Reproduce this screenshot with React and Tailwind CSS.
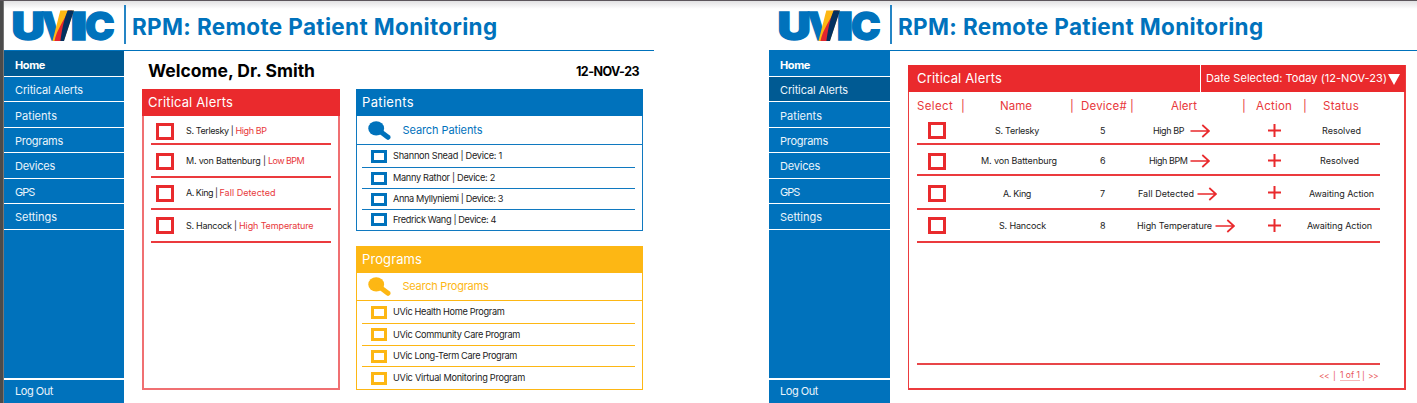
import { useLayoutEffect, useRef, useState } from "react";

// Text set to a given width by spreading the difference over its letters.
function T({ w, className = "", children }) {
  const ref = useRef(null);
  const [ls, setLs] = useState(null);
  useLayoutEffect(() => {
    if (ls === null) {
      const n = ref.current.textContent.length;
      setLs((w - ref.current.getBoundingClientRect().width) / n);
    }
  }, [w, ls]);
  return (
    <span ref={ref} className={"inline-block shrink-0 whitespace-pre " + className} style={{ letterSpacing: ls === null ? undefined : ls + "px" }}>
      {children}
    </span>
  );
}

function Logo() {
  return (
    <svg viewBox="0 0 104 44" className="h-[44px] w-[104px] shrink-0 overflow-visible" fontFamily="Inter, sans-serif" fontWeight="900" fontSize="38.5" fill="#0072bc" stroke="#0072bc" strokeWidth="1.3">
      <text x="-1.6" y="34.8" textLength="33.4" lengthAdjust="spacingAndGlyphs">U</text>
      <text x="28.6" y="34.8" textLength="31" lengthAdjust="spacingAndGlyphs">V</text>
      <text x="57.2" y="34.8" textLength="17.2" lengthAdjust="spacingAndGlyphs">I</text>
      <text x="72" y="34.8" textLength="29.6" lengthAdjust="spacingAndGlyphs">C</text>
      <g stroke="none" transform="translate(0 5.6)">
        <path d="M47.3 0H60.8L50.8 30.4H39.5Z" fill="#fdb714" />
        <path d="M55 0C52 9 43.5 19 41.5 30.4H49L59 0Z" fill="#e3262f" />
        <path d="M54.6 0H61L51 30.4H47.4C49 20 50 12 54.6 0Z" fill="#04305f" />
      </g>
    </svg>
  );
}

function Header({ className }) {
  return (
    <header className={"flex h-[50px] shrink-0 items-start " + className}>
      <div className="pt-[5px]"><Logo /></div>
      <div className="ml-[7.5px] mt-[5px] h-[39px] w-[2px] shrink-0 bg-[#2585c5]" />
      <div className="flex h-[53px] items-center pl-[6px]">
        <T w={365.5} className="text-[22.5px] font-bold text-[#0072bc]">RPM: Remote Patient Monitoring</T>
      </div>
    </header>
  );
}

const nav = [
  ["Home", 30, "h-[26px] pt-[4px]"],
  ["Critical Alerts", 68, "h-[25px] pt-[3px]"],
  ["Patients", 42, "h-[26px] pt-[3px]"],
  ["Programs", 48, "h-[25px] pt-[2px]"],
  ["Devices", 40, "h-[26px] pt-[2px]"],
  ["GPS", 19.5, "h-[25px] pt-[2px]"],
  ["Settings", 42, "h-[26px] pt-[2px]"],
];

function Sidebar({ active, className }) {
  return (
    <nav className={"flex h-[353px] shrink-0 flex-col bg-[#0072bc] pt-px text-[11px] leading-none text-[#eaf4fb] " + className}>
      {nav.map(([label, w, h]) => (
        <div key={label} className={"flex shrink-0 items-center border-b-[1.5px] border-white pl-[11px] " + h + (label === active ? " bg-[#005a93]" : "") + (label === "Home" ? " font-bold text-white" : "")}>
          <T w={w}>{label}</T>
        </div>
      ))}
      <div className="mt-auto flex h-[25px] items-center border-t-2 border-white pl-[11px]">
        <T w={38}>Log Out</T>
      </div>
    </nav>
  );
}

function BigBox() {
  return <div className="h-[17px] w-[18px] shrink-0 border-[3px] border-[#e92a2d] bg-white" />;
}

const alerts = [
  ["S. Terlesky | ", "High BP", 49.5, 31, "h-[29px] pt-[3px]"],
  ["M. von Battenburg | ", "Low BPM", 82, 36, "h-[33px] pt-px"],
  ["A. King | ", "Fall Detected", 33.5, 56, "h-[32px]"],
  ["S. Hancock | ", "High Temperature", 53, 74.5, "h-[33px]"],
];

function AlertsCard() {
  return (
    <section className="h-[301px] w-[198px] border-2 border-[#f07072]">
      <div className="-mx-[2px] -mt-[2px] flex h-[27px] items-center bg-[#ea2a2d] pl-[6px] pt-px text-[13px] text-white">
        <T w={85}>Critical Alerts</T>
      </div>
      <div className="ml-[7px] w-[180px]">
        {alerts.map(([who, what, w1, w2, h]) => (
          <div key={who} className={"flex items-center border-b-2 border-[#eb3a3d] pl-[5px] text-[9px] text-[#1c1c1c] " + h}>
            <BigBox />
            <div className="ml-[12px] flex">
              <T w={w1}>{who}</T>
              <T w={w2} className="text-[#e8383b]">{what}</T>
            </div>
          </div>
        ))}
      </div>
    </section>
  );
}

function Search() {
  return (
    <svg viewBox="0 0 23 19" className="h-[19px] w-[23px] shrink-0" fill="currentColor">
      <ellipse cx="8.2" cy="7.4" rx="7.9" ry="7.2" />
      <path d="M10 8.8L20 16.3" stroke="currentColor" strokeWidth="5" strokeLinecap="round" />
    </svg>
  );
}

const blue = { line: "border-[#1079c0]", box: "border-[#0072bc]", bg: "bg-[#0072bc]", text: "text-[#0072bc]" };
const gold = { line: "border-[#fdb714]", box: "border-[#fdb714]", bg: "bg-[#fdb714]", text: "text-[#fdb714]" };

function ListCard({ tone, title, titleW, search, searchW, items, className, searchH }) {
  return (
    <section className={"w-[287px] border " + tone.line + " " + className}>
      <div className={"-m-px mb-0 flex h-[27px] items-center pl-[6px] pt-px text-[13px] text-white " + tone.bg}>
        <T w={titleW}>{title}</T>
      </div>
      <div className={"flex items-center border-b-[1.5px] pl-[11px] " + searchH + " " + tone.line + " " + tone.text}>
        <Search />
        <T w={searchW} className="ml-[11.5px] text-[11px]">{search}</T>
      </div>
      <div className="ml-[5px] w-[273px]">
        {items.map(([label, w, h]) => (
          <div key={label} className={"flex items-center border-b-[1.5px] pl-[9px] text-[9.2px] text-[#1c1c1c] last:border-b-0 " + h + " " + tone.line}>
            <div className={"h-[13px] w-[16px] shrink-0 border-[3px] bg-white " + tone.box} />
            <T w={w} className="ml-[6px]">{label}</T>
          </div>
        ))}
      </div>
    </section>
  );
}

const patients = [
  ["Shannon Snead | Device: 1", 109, "h-[23px]"],
  ["Manny Rathor | Device: 2", 102, "h-[21px]"],
  ["Anna Myllyniemi | Device: 3", 110, "h-[21px]"],
  ["Fredrick Wang | Device: 4", 103, "h-[19px]"],
];
const programs = [
  ["UVic Health Home Program", 111.5, "h-[23px]"],
  ["UVic Community Care Program", 127, "h-[22px]"],
  ["UVic Long-Term Care Program", 124, "h-[21px]"],
  ["UVic Virtual Monitoring Program", 132, "h-[22px]"],
];

function Arrow() {
  return (
    <svg viewBox="0 0 20 14" className="ml-[3px] h-[14px] w-[20px] shrink-0" fill="none" stroke="#e92a2d" strokeWidth="1.7">
      <path d="M.5 7H19M12.3 1L19 7L12.3 13" />
    </svg>
  );
}
function Plus() {
  return (
    <svg viewBox="0 0 13 13" className="h-[13px] w-[13px] shrink-0" fill="none" stroke="#e92a2d" strokeWidth="2">
      <path d="M0 6.5H13M6.5 0V13" />
    </svg>
  );
}

const columns = [
  ["Select", 36, ""],
  ["|", 3, "ml-[8px]"],
  ["Name", 32, "ml-[36px]"],
  ["|", 3, "ml-[38px]"],
  ["Device#", 46, "ml-[8px]"],
  ["|", 3, "ml-[3px]"],
  ["Alert", 26, "ml-[38px]"],
  ["|", 3, "ml-[45px]"],
  ["Action", 36, "ml-[11px]"],
  ["|", 3, "ml-[11px]"],
  ["Status", 36, "ml-[17px]"],
];

const rows = [
  { name: "S. Terlesky", nw: 44, np: "pl-[49px]", dev: "5", alert: "High BP", aw: 31, ap: "pl-[33px]", arrow: "pl-[3px]", plus: "", st: "Resolved", sw: 39, sp: "pl-[41px]", h: "h-[28px] pt-px" },
  { name: "M. von Battenburg", nw: 76, np: "pl-[35px]", dev: "6", alert: "High BPM", aw: 38.5, ap: "pl-[29px]", arrow: "-ml-px", plus: "pb-px", st: "Resolved", sw: 39, sp: "pl-[39px]", h: "h-[31px] pt-[3px]" },
  { name: "A. King", nw: 28, np: "pl-[57px]", dev: "7", alert: "Fall Detected", aw: 56, ap: "pl-[18px]", arrow: "", plus: "pb-[3px]", st: "Awaiting Action", sw: 65, sp: "pl-[28px]", h: "h-[34px] pt-[3px]" },
  { name: "S. Hancock", nw: 47, np: "pl-[53px]", dev: "8", alert: "High Temperature", aw: 75, ap: "pl-[17px]", arrow: "", plus: "", st: "Awaiting Action", sw: 65, sp: "pl-[26px]", h: "h-[33px]" },
];

function AlertsTable() {
  return (
    <section className="flex h-[325px] w-[498px] flex-col border border-r-2 border-b-2 border-[#ec3b3e]">
      <div className="-mx-px -mt-px flex h-[27px] shrink-0 items-stretch bg-[#ea2a2d] text-white">
        <div className="flex w-[293px] items-center border-r border-white pl-[9px] pt-px text-[13px]">
          <T w={85}>Critical Alerts</T>
        </div>
        <div className="flex items-center pl-[5px] text-[11px]">
          <T w={181}>Date Selected: Today (12-NOV-23)</T>
          <svg viewBox="0 0 12 11" className="ml-[1px] mt-[2px] h-[11px] w-[12px] shrink-0" fill="#fff"><path d="M0 0H12L6 11Z" /></svg>
        </div>
      </div>
      <div className="ml-[8px] flex h-[25px] w-[463px] shrink-0 items-center pt-[5px] text-[11.5px] text-[#e8383b]">
        {columns.map(([label, w, m], i) => <T key={i} w={w} className={m}>{label}</T>)}
      </div>
      <div className="ml-[8px] w-[463px] shrink-0 text-[9px] text-[#1c1c1c]">
        {rows.map((r) => (
          <div key={r.name} className={"flex items-center border-b-2 border-[#eb3a3d] pl-[11px] " + r.h}>
            <BigBox />
            <div className={"flex w-[154px] shrink-0 " + r.np}><T w={r.nw}>{r.name}</T></div>
            <div className="w-[20px] shrink-0">{r.dev}</div>
            <div className={"flex w-[148px] shrink-0 items-center " + r.ap}>
              <T w={r.aw}>{r.alert}</T>
              <div className={r.arrow}><Arrow /></div>
            </div>
            <div className={r.plus}><Plus /></div>
            <div className={"flex shrink-0 " + r.sp}><T w={r.sw}>{r.st}</T></div>
          </div>
        ))}
      </div>
      <div className="ml-[8px] mt-auto flex h-[25px] w-[463px] shrink-0 items-center justify-end border-t-2 border-[#e84649] pr-[2px] pb-px text-[8.5px] leading-none text-[#e9575a]">
        <T w={10}>{"<<"}</T>
        <span className="ml-[4px] w-[3px]">|</span>
        <T w={20} className="ml-[4px] border-b border-[#f6b6b7]">1 of 1</T>
        <span className="ml-[2px] w-[3px]">|</span>
        <T w={10} className="ml-[3px]">{">>"}</T>
      </div>
    </section>
  );
}

export default function App() {
  return (
    <div className="h-[403px] w-[1417px] overflow-hidden border-t border-[#5c565c] bg-white font-['Inter',sans-serif]">
      <div className="-mb-px flex h-[403px]">
        <div className="w-[4px] shrink-0 border-r border-[#777] bg-[#4b4b4b]" />
        <div className="-mt-px flex w-[765px] shrink-0 flex-col bg-linear-to-b from-[#dedee0] to-white to-[9px] bg-clip-content pt-px">
          <Header className="-mt-px pl-[8.5px]" />
          <div className="flex">
            <Sidebar active="Home" className="w-[120px]" />
            <div className="w-[530px] border-t border-[#0072bc] pl-[18px]">
              <div className="flex h-[38px] w-[500px] items-center pl-[6px] pt-[3px] text-black">
                <T w={167} className="text-[17.5px] font-bold">Welcome, Dr. Smith</T>
                <T w={63} className="ml-auto mt-[2px] text-[12.5px] font-bold">12-NOV-23</T>
                <div className="w-[3px]" />
              </div>
              <div className="flex items-start gap-[16px]">
                <AlertsCard />
                <div className="flex flex-col gap-[15px]">
                  <ListCard tone={blue} title="Patients" titleW={52} search="Search Patients" searchW={80} searchH="h-[29px]" items={patients} className="h-[142px]" />
                  <ListCard tone={gold} title="Programs" titleW={60} search="Search Programs" searchW={86} searchH="h-[28px]" items={programs} className="h-[144px]" />
                </div>
              </div>
            </div>
          </div>
        </div>
        <div className="-mt-px flex flex-1 flex-col bg-linear-to-b from-[#dedee0] to-white to-[9px] bg-clip-content pt-px">
          <Header className="-mt-px pl-[9.5px]" />
          <div className="flex">
            <Sidebar active="Critical Alerts" className="w-[121px]" />
            <div className="w-[527px] border-t border-[#0072bc] pl-[18px] pt-[14px]">
              <AlertsTable />
            </div>
          </div>
        </div>
      </div>
    </div>
  );
}
